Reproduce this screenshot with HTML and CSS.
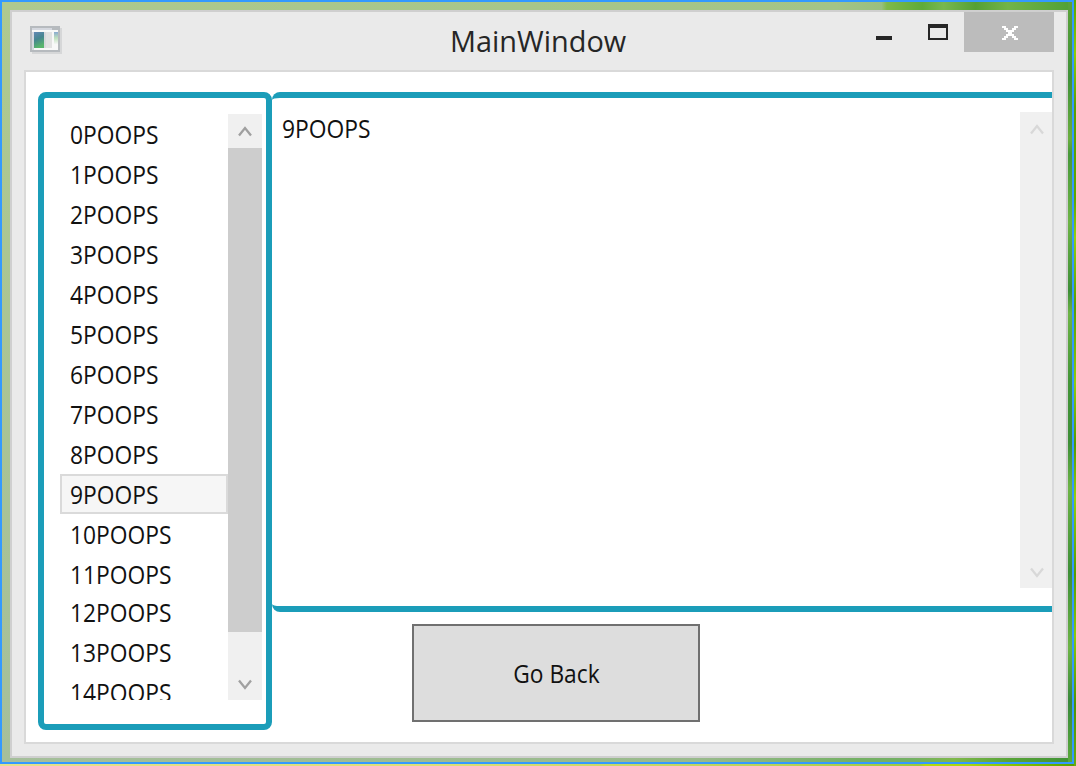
FILE: index.html
```html
<!DOCTYPE html>
<html lang="en">
<head>
<meta charset="utf-8">
<title>MainWindow</title>
<link rel="stylesheet" href="styles.css">
</head>
<body>
<div class="outside">
<div class="desktop">
<main class="window">
  <header class="titlebar">
    <svg class="app-icon" width="32" height="28" viewBox="0 0 32 28" shape-rendering="crispEdges">
      <defs>
        <linearGradient id="pic" x1="0" y1="0" x2="0.3" y2="1"><stop offset="0" stop-color="#6389b5"/><stop offset=".5" stop-color="#46868f"/><stop offset="1" stop-color="#58b56c"/></linearGradient>
        <linearGradient id="side" x1="0" y1="0" x2="0" y2="1"><stop offset="0" stop-color="#89aad0"/><stop offset=".5" stop-color="#bfe0bd"/><stop offset="1" stop-color="#f4f6f4"/></linearGradient>
      </defs>
      <path fill="#d6d7d8" d="M2 2h30v26H2z"/>
      <path fill="#b6babe" d="M0 0h30v26H0z"/>
      <path fill="#d5d8df" d="M2 2h20v2H2zM2 4h2v20H2z"/>
      <path fill="#f8f8f8" d="M2 4h26v20H4V6H2z"/>
      <path fill="url(#pic)" d="M4 6h10v16H4z"/>
      <path fill="#d8d9dc" d="M14 6h2v16h-2z"/>
      <path fill="#e2e2e2" d="M16 6h6v16h-6z"/>
      <path fill="url(#side)" d="M24 6h4v12h-4z"/>
    </svg>
    <h1 class="title"><span class="title-text">MainWindow</span></h1>
    <div class="controls">
      <svg width="90" height="40" viewBox="0 0 90 40" shape-rendering="crispEdges"><path fill="#262626" d="M2 24h16v4H2zM54 12h20v16H54zm2 4v10h16V16z" fill-rule="evenodd"/></svg>
      <div class="close"><svg width="16" height="14" viewBox="0 0 16 14" shape-rendering="crispEdges"><path fill="#fff" d="M0 0h4v2h2v2h4V2h2V0h4v2h-2v2h-2v2h-2v2h2v2h2v2h2v2h-4v-2h-2v-2H6v2H4v2H0v-2h2v-2h2V8h2V6H4V4H2V2H0z"/></svg></div>
    </div>
  </header>
  <section class="client">
    <div class="list-box">
      <ul class="list">
        <li><span>0POOPS</span></li>
        <li><span>1POOPS</span></li>
        <li><span>2POOPS</span></li>
        <li><span>3POOPS</span></li>
        <li><span>4POOPS</span></li>
        <li><span>5POOPS</span></li>
        <li><span>6POOPS</span></li>
        <li><span>7POOPS</span></li>
        <li><span>8POOPS</span></li>
        <li class="selected"><span>9POOPS</span></li>
        <li><span>10POOPS</span></li>
        <li class="short"><span>11POOPS</span></li>
        <li><span>12POOPS</span></li>
        <li><span>13POOPS</span></li>
        <li><span>14POOPS</span></li>
      </ul>
      <div class="scrollbar">
        <svg class="arrow" viewBox="0 0 14 12"><path d="M1 10.500L7 3L13 10.500"/></svg>
        <div class="thumb"></div>
        <svg class="arrow" viewBox="0 0 14 12"><path d="M1 1.500L7 9L13 1.500"/></svg>
      </div>
    </div>
    <div class="content">
      <div class="detail-box">
        <div class="detail"><span>9POOPS</span></div>
        <div class="scrollbar disabled">
          <svg class="arrow" viewBox="0 0 14 12"><path d="M1 10.500L7 3L13 10.500"/></svg>
          <svg class="arrow" viewBox="0 0 14 12"><path d="M1 1.500L7 9L13 1.500"/></svg>
        </div>
      </div>
      <button class="back"><span>Go Back</span></button>
    </div>
  </section>
</main>
</div>
</div>
</body>
</html>
```
FILE: styles.css
```css
* { box-sizing: border-box; }
body { margin: 0; font-family: "Open Sans", "Noto Sans", sans-serif; color: #111; }
.outside {
  width: 1076px; height: 766px; padding: 0 2px 2px 0; overflow: hidden;
  background:
    linear-gradient(180deg, #5ba300, #8ecb0a 7%, #5a9c05 14%, #5fa500 26%, #93cf13 31%, #579b05 40%, #8fcb10 50%, #549804 58%, #92ce12 65%, #569a04 75%, #8bc80e 83%, #4e9108 92%, #6aaa14) right top / 2px 100% no-repeat,
    linear-gradient(90deg, #e3e08c, #dcdf78 40%, #b8d258 72%, #9cc93a 85.500%, #b4da0c 86%, #a9d60f 90%, #7fbd00 95%, #58a000);
}
.desktop {
  width: 1074px; height: 764px; border: 2px solid #3399ff; padding: 8px 4px 4px 8px;
  background:
    linear-gradient(180deg, #5aa33a, #3f9038 10%, #6aae40 18%, #47983a 20%, #6cb346 29%, #3d8e37 38%, #6cb346 41%, #429437 50%, #3d8e37 58%, #6cb346 64%, #3d8e37 75%, #6cb346 85%, #38883a 92%, #5aaa3c) right top / 4px 100% no-repeat,
    linear-gradient(90deg, #aec98f, #a3c487 78%, #99bf7f 82.200%, #7fb94a 82.700%, #5fab38 86%, #78b850 88%, #55a035 91%, #72b449 94%, #50a035) left top / 100% 8px no-repeat,
    linear-gradient(90deg, #a5bf9b, #98ba8b 65%, #73b064 80%, #73b064 85%, #7fb84b 89%, #58a438 94%, #409237) left bottom / 100% 4px no-repeat,
    linear-gradient(180deg, #aec98f, #a5bf9b);
}
.window { height: 748px; width: 1058px; border: 2px solid #cfcfcf; background: #eaeaea; padding: 0 12px 12px; }
.titlebar { height: 58px; display: flex; align-items: flex-start; }
.app-icon { margin: 14px 0 0 6px; flex: none; }
.title { margin: 7px 0 0; flex: 1; height: 44px; font-size: 30px; line-height: 44px; font-weight: 400; color: #262626; padding-left: 388px; white-space: nowrap; }
.title-text { display: inline-block; transform-origin: 0 50%; transform: scaleX(.963); }
.controls { display: flex; flex: none; }
.close { width: 90px; height: 40px; background: #bcbcbc; display: flex; align-items: flex-start; justify-content: center; padding-top: 14px; padding-left: 2px; }
.client { height: 674px; width: 1030px; border: 2px solid #d9d9d9; background: #fff; padding: 20px 0 12px 12px; display: flex; }
.list-box { width: 234px; height: 638px; flex: none; border: 6px solid #1b9db9; border-radius: 8px; padding: 16px 4px 24px 16px; display: flex; }
.list { list-style: none; margin: 0; padding: 0; width: 168px; height: 586px; overflow: hidden; }
.list li, .detail, .back { font-size: 25px; line-height: 36px; white-space: nowrap; }
.list li { height: 40px; border: 2px solid transparent; padding-left: 8px; }
.list li.short { height: 38px; }
.list li.selected { background: #f6f6f6; border-color: #dadada; }
.list span, .detail span, .back span { display: inline-block; transform-origin: 0 50%; transform: scaleX(.912); }
.scrollbar { width: 34px; height: 586px; background: #f0f0f0; display: flex; flex-direction: column; align-items: center; justify-content: space-between; padding: 11px 0 9px; }
.arrow { width: 14px; height: 12px; flex: none; fill: none; stroke: #a0a0a0; stroke-width: 2.300; }
.thumb { width: 34px; height: 484px; background: #cdcdcd; margin: 0 0 36px; }
.content { flex: 1; display: flex; flex-direction: column; }
.detail-box { height: 520px; border: solid #1b9db9; border-width: 6px 0; border-radius: 8px 0 0 8px; padding: 14px 0 18px 10px; display: flex; }
.detail { flex: 1; line-height: 32px; }
.disabled { width: 32px; height: 476px; padding: 11px 0 9px 2px; }
.disabled .arrow { stroke: #d8d8d8; }
.back { width: 288px; height: 98px; margin: 12px 0 0 140px; border: 2px solid #707070; background: #ddd; color: #111; font-family: inherit; padding: 0 0 1px; display: flex; align-items: center; justify-content: center; }
.back span { transform-origin: 50% 50%; transform: scaleX(.91); }
```
